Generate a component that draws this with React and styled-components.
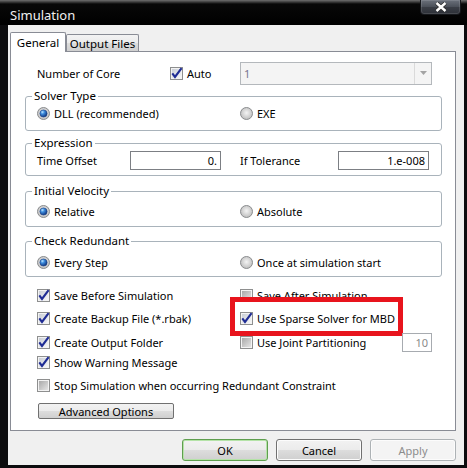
import React from "react";
import styled, { createGlobalStyle } from "styled-components";

const GlobalStyle = createGlobalStyle`
  html, body { margin: 0; padding: 0; background: #0c0c0e; }
  body { font-family: "Noto Sans", "Open Sans", sans-serif; font-size: 11px; color: #000; }
  #root { width: 467px; height: 468px; }
  * { box-sizing: border-box; }
`;

const Window = styled.div`
  width: 467px;
  height: 468px;
  display: flex;
  flex-direction: column;
  background: #0c0c0e;
  overflow: hidden;
`;

const TitleBar = styled.div`
  height: 25px;
  flex: none;
  display: flex;
  justify-content: space-between;
  align-items: flex-start;
  padding: 0 6px 0 10px;
  background: linear-gradient(to bottom, #707070 0px, #3c3c3c 2px, #080808 4px, #000 25px);
`;

const TitleText = styled.div`
  font-family: "Noto Sans", sans-serif;
  font-size: 13px;
  line-height: 18px;
  margin-top: 6px;
  color: #f0f0f0;
`;

const CloseButton = styled.div`
  width: 41px;
  height: 15px;
  display: flex;
  align-items: center;
  justify-content: center;
  border: 1px solid #15171b;
  border-top: none;
  border-radius: 0 0 4px 4px;
  background: linear-gradient(to bottom, #6b717b 0%, #4a4f58 50%, #3a3e46 51%, #2d3037 100%);
  box-shadow: inset 0 0 0 1px rgba(255, 255, 255, 0.12);
`;

const Client = styled.div`
  flex: 1;
  margin: 0 3px 3px 8px;
  padding: 7px 8px 0 2px;
  background: #f0f0f0;
  display: flex;
  flex-direction: column;
`;

const TabStrip = styled.div`
  height: 19px;
  display: flex;
  align-items: flex-end;
  position: relative;
  z-index: 1;
`;

const Tab = styled.div`
  width: ${(p) => p.$w}px;
  height: ${(p) => (p.$active ? 20 : 17)}px;
  margin-bottom: ${(p) => (p.$active ? -1 : 0)}px;
  display: flex;
  align-items: center;
  justify-content: center;
  padding-bottom: ${(p) => (p.$active ? 1 : 0)}px;
  border: 1px solid #898c95;
  border-bottom: none;
  border-radius: 2px 2px 0 0;
  background: ${(p) =>
    p.$active
      ? "#ffffff"
      : "linear-gradient(to bottom, #f3f3f3 0%, #ebebeb 50%, #dddddd 51%, #cfcfcf 100%)"};
  font-size: 11.5px;
`;

const Panel = styled.div`
  height: 380px;
  flex: none;
  border: 1px solid #898c95;
  background: #ffffff;
  padding: 0 13px 0 14px;
  display: flex;
  flex-direction: column;
`;

const TopRow = styled.div`
  margin-top: 9px;
  height: 24px;
  display: grid;
  grid-template-columns: 203px 192px;
  align-items: center;
  padding-left: 12px;
`;

const Field = styled.div`
  display: flex;
  align-items: center;
  height: 18px;
  padding-right: ${(p) => p.$pr || 0}px;
  position: relative;
`;

const Label = styled.span`
  width: ${(p) => (p.$w ? `${p.$w}px` : "auto")};
  white-space: nowrap;
`;

const Option = styled.label`
  display: flex;
  align-items: center;
  gap: 4px;
  height: 18px;
  white-space: nowrap;
  svg { flex: none; }
`;

const ComboBox = styled.div`
  height: 23px;
  border: 1px solid #b4b8bc;
  background: #f4f4f4;
  display: flex;
  align-items: center;
  justify-content: space-between;
  color: #76748e;
  padding-left: 3px;
`;

const ComboArrow = styled.div`
  width: 17px;
  height: 100%;
  border-left: 1px solid #dadada;
  display: flex;
  align-items: center;
  justify-content: center;
`;

const Group = styled.fieldset`
  margin: ${(p) => p.$mt}px 0 0 0;
  padding: 0;
  min-width: 0;
  border: 1px solid #a9b3bb;
  border-radius: 3px;
`;

const Legend = styled.legend`
  margin-left: 6px;
  padding: 0 2px;
  line-height: 16px;
  font-size: 11.5px;
`;

const GroupBody = styled.div`
  display: grid;
  grid-template-columns: 203px 1fr;
  align-items: center;
  padding: ${(p) => p.$pt}px 0 ${(p) => p.$pb}px 11px;
`;

const TextBox = styled.div`
  width: 91px;
  height: 19px;
  margin-left: auto;
  border: 1px solid #7c7f84;
  background: #fff;
  display: flex;
  align-items: center;
  justify-content: flex-end;
  padding-right: 3px;
  color: ${(p) => (p.$dim ? "#8a8a8a" : "#000")};
`;

const SmallBox = styled(TextBox)`
  width: 30px;
  height: 19px;
  border-color: #a7abb0;
`;

const CheckRow = styled.div`
  margin-top: ${(p) => p.$mt}px;
  height: 18px;
  display: grid;
  grid-template-columns: 203px 192px;
  align-items: center;
  padding-left: 12px;
`;

const Highlight = styled.div`
  position: absolute;
  left: -10px;
  top: -12px;
  width: 173px;
  height: 39px;
  border: 5px solid #e8141d;
  pointer-events: none;
`;

const SmallButton = styled.div`
  margin: 9px 0 0 13px;
  width: 136px;
  height: 16px;
  border: 1px solid #707070;
  border-radius: 2px;
  background: linear-gradient(to bottom, #f2f2f2 0%, #ebebeb 50%, #dddddd 51%, #cfcfcf 100%);
  display: flex;
  align-items: center;
  justify-content: center;
  font-size: 11px;
`;

const Footer = styled.div`
  display: flex;
  justify-content: flex-end;
  gap: 8px;
  padding-top: 8px;
`;

const DialogButton = styled.div`
  width: 86px;
  height: 22px;
  border: 1px solid ${(p) => (p.$default ? "#5f9e4f" : p.$disabled ? "#adb2b5" : "#707070")};
  border-radius: 3px;
  background: ${(p) =>
    p.$disabled
      ? "#f4f4f4"
      : "linear-gradient(to bottom, #f2f2f2 0%, #ebebeb 50%, #dddddd 51%, #cfcfcf 100%)"};
  box-shadow: ${(p) => (p.$default ? "inset 0 0 0 1px #b5e3a8" : "inset 0 0 0 1px #fcfcfc")};
  color: ${(p) => (p.$disabled ? "#8c8c8c" : "#000")};
  display: flex;
  align-items: center;
  justify-content: center;
  font-size: 11px;
`;

function CheckIcon({ checked }) {
  return (
    <svg width="13" height="13" viewBox="0 0 13 13">
      <defs>
        <linearGradient id="cbOn" x1="0" y1="0" x2="1" y2="1">
          <stop offset="0" stopColor="#c9ced6" />
          <stop offset="1" stopColor="#f7f7f7" />
        </linearGradient>
        <linearGradient id="cbOff" x1="0" y1="0" x2="1" y2="1">
          <stop offset="0" stopColor="#a9a9a9" />
          <stop offset="1" stopColor="#e4e4e4" />
        </linearGradient>
      </defs>
      <rect x="0.5" y="0.5" width="12" height="12" fill="#f3f3f3" stroke="#8e8f8f" />
      <rect x="2" y="2" width="9" height="9" fill={checked ? "url(#cbOn)" : "url(#cbOff)"} />
      {checked && (
        <path d="M2.3 6.4 L5 10 L11.6 1.2" stroke="#1f2c94" strokeWidth="2.1" fill="none" strokeLinejoin="miter" />
      )}
    </svg>
  );
}

function RadioIcon({ checked }) {
  return (
    <svg width="13" height="13" viewBox="0 0 13 13">
      <defs>
        <radialGradient id="rOff" cx="0.5" cy="0.45" r="0.6">
          <stop offset="0" stopColor="#f4f4f4" />
          <stop offset="1" stopColor="#b9b9b9" />
        </radialGradient>
        <radialGradient id="rDot" cx="0.35" cy="0.3" r="0.75">
          <stop offset="0" stopColor="#bfe6ff" />
          <stop offset="0.35" stopColor="#3f8fe0" />
          <stop offset="1" stopColor="#0b2f7a" />
        </radialGradient>
      </defs>
      <circle cx="6.5" cy="6.5" r="6" fill="url(#rOff)" stroke="#8b8d8f" />
      {checked && <circle cx="6.5" cy="6.5" r="3.6" fill="url(#rDot)" stroke="#1a3f84" strokeWidth="0.6" />}
    </svg>
  );
}

const Check = ({ checked, children }) => (
  <Option>
    <CheckIcon checked={checked} />
    <span>{children}</span>
  </Option>
);

const Radio = ({ checked, children }) => (
  <Option>
    <RadioIcon checked={checked} />
    <span>{children}</span>
  </Option>
);

export default function App() {
  return (
    <>
      <GlobalStyle />
      <Window>
        <TitleBar>
          <TitleText>Simulation</TitleText>
          <CloseButton>
            <svg width="14" height="10" viewBox="0 0 14 10">
              <path d="M2.5 1 L11.5 9 M11.5 1 L2.5 9" stroke="#2b2b2b" strokeWidth="4" />
              <path d="M2.5 1 L11.5 9 M11.5 1 L2.5 9" stroke="#ffffff" strokeWidth="2.4" />
            </svg>
          </CloseButton>
        </TitleBar>
        <Client>
          <TabStrip>
            <Tab $active $w={56}>General</Tab>
            <Tab $w={73}>Output Files</Tab>
          </TabStrip>
          <Panel>
            <TopRow>
              <Field>
                <Label $w={133}>Number of Core</Label>
                <Check checked>Auto</Check>
              </Field>
              <ComboBox>
                <span>1</span>
                <ComboArrow>
                  <svg width="7" height="4" viewBox="0 0 7 4">
                    <path d="M0 0 H7 L3.5 4 Z" fill="#a3a3a3" />
                  </svg>
                </ComboArrow>
              </ComboBox>
            </TopRow>

            <Group $mt={3}>
              <Legend>Solver Type</Legend>
              <GroupBody $pt={0} $pb={8}>
                <Radio checked>DLL (recommended)</Radio>
                <Radio>EXE</Radio>
              </GroupBody>
            </Group>

            <Group $mt={4}>
              <Legend>Expression</Legend>
              <GroupBody $pt={0} $pb={6}>
                <Field $pr={19}>
                  <Label>Time Offset</Label>
                  <TextBox>0.</TextBox>
                </Field>
                <Field $pr={12}>
                  <Label>If Tolerance</Label>
                  <TextBox>1.e-008</TextBox>
                </Field>
              </GroupBody>
            </Group>

            <Group $mt={7}>
              <Legend>Initial Velocity</Legend>
              <GroupBody $pt={3} $pb={6}>
                <Radio checked>Relative</Radio>
                <Radio>Absolute</Radio>
              </GroupBody>
            </Group>

            <Group $mt={6}>
              <Legend>Check Redundant</Legend>
              <GroupBody $pt={4} $pb={5}>
                <Radio checked>Every Step</Radio>
                <Radio>Once at simulation start</Radio>
              </GroupBody>
            </Group>

            <CheckRow $mt={9}>
              <Check checked>Save Before Simulation</Check>
              <Check>Save After Simulation</Check>
            </CheckRow>
            <CheckRow $mt={5}>
              <Check checked>Create Backup File (*.rbak)</Check>
              <Field>
                <Check checked>Use Sparse Solver for MBD</Check>
                <Highlight />
              </Field>
            </CheckRow>
            <CheckRow $mt={6}>
              <Check checked>Create Output Folder</Check>
              <Field>
                <Check>Use Joint Partitioning</Check>
                <SmallBox $dim>10</SmallBox>
              </Field>
            </CheckRow>
            <CheckRow $mt={2}>
              <Check checked>Show Warning Message</Check>
            </CheckRow>
            <CheckRow $mt={5}>
              <Check>Stop Simulation when occurring Redundant Constraint</Check>
            </CheckRow>
            <SmallButton>Advanced Options</SmallButton>
          </Panel>
          <Footer>
            <DialogButton $default>OK</DialogButton>
            <DialogButton>Cancel</DialogButton>
            <DialogButton $disabled>Apply</DialogButton>
          </Footer>
        </Client>
      </Window>
    </>
  );
}
